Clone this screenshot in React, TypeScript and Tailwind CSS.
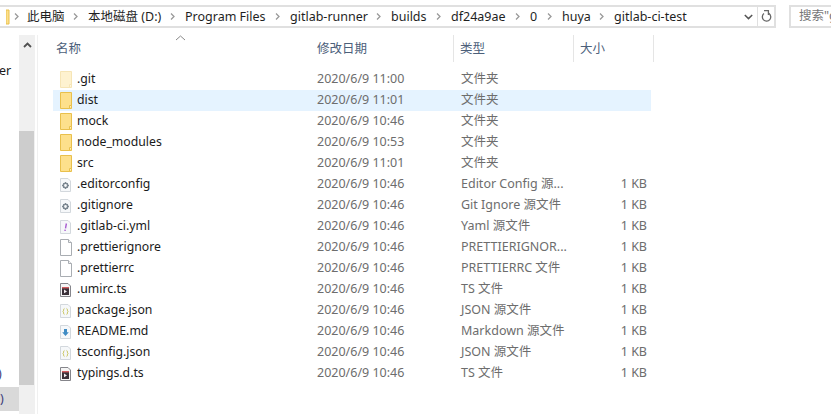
import type { ReactNode } from "react"

type Kind = "folder" | "hidden" | "gear" | "yml" | "blank" | "ts" | "json" | "md"

const files: { name: string; date: string; type: string; size?: string; kind: Kind; hover?: boolean }[] = [
  { name: ".git", date: "2020/6/9 11:00", type: "文件夹", kind: "hidden" },
  { name: "dist", date: "2020/6/9 11:01", type: "文件夹", kind: "folder", hover: true },
  { name: "mock", date: "2020/6/9 10:46", type: "文件夹", kind: "folder" },
  { name: "node_modules", date: "2020/6/9 10:53", type: "文件夹", kind: "folder" },
  { name: "src", date: "2020/6/9 11:01", type: "文件夹", kind: "folder" },
  { name: ".editorconfig", date: "2020/6/9 10:46", type: "Editor Config 源...", size: "1 KB", kind: "gear" },
  { name: ".gitignore", date: "2020/6/9 10:46", type: "Git Ignore 源文件", size: "1 KB", kind: "gear" },
  { name: ".gitlab-ci.yml", date: "2020/6/9 10:46", type: "Yaml 源文件", size: "1 KB", kind: "yml" },
  { name: ".prettierignore", date: "2020/6/9 10:46", type: "PRETTIERIGNOR...", size: "1 KB", kind: "blank" },
  { name: ".prettierrc", date: "2020/6/9 10:46", type: "PRETTIERRC 文件", size: "1 KB", kind: "blank" },
  { name: ".umirc.ts", date: "2020/6/9 10:46", type: "TS 文件", size: "1 KB", kind: "ts" },
  { name: "package.json", date: "2020/6/9 10:46", type: "JSON 源文件", size: "1 KB", kind: "json" },
  { name: "README.md", date: "2020/6/9 10:46", type: "Markdown 源文件", size: "1 KB", kind: "md" },
  { name: "tsconfig.json", date: "2020/6/9 10:46", type: "JSON 源文件", size: "1 KB", kind: "json" },
  { name: "typings.d.ts", date: "2020/6/9 10:46", type: "TS 文件", size: "1 KB", kind: "ts" },
]

function Sep() {
  return (
    <svg width="5" height="7" viewBox="0 0 5 7" className="shrink-0">
      <path d="M1 0.5 L4 3.5 L1 6.5" fill="none" stroke="#9a9a9a" strokeWidth="1.3" />
    </svg>
  )
}

function Crumb({ className, children }: { className: string; children: ReactNode }) {
  return (
    <div className={`flex shrink-0 items-center ${className}`}>
      <span className="flex-1 whitespace-nowrap pt-px">{children}</span>
      <Sep />
      <span className="w-[10px]" />
    </div>
  )
}

function FolderIcon({ faded }: { faded?: boolean }) {
  return (
    <svg width="14" height="17" viewBox="0 0 14 17" className={faded ? "opacity-40" : ""}>
      <path d="M1.5 0.5 H12.5 V16.5 H1.5 Z" fill="#fde08c" stroke="#e9c04c" />
      <path d="M10.5 16.5 V13.5 H12.5" fill="#fff3c8" stroke="#e9c04c" />
    </svg>
  )
}

function BlankIcon() {
  return (
    <svg width="14" height="17" viewBox="0 0 14 17">
      <path d="M1.5 0.5 H9.5 L12.5 3.5 V16.5 H1.5 Z" fill="#ffffff" stroke="#a9adb2" />
      <path d="M9.5 0.5 V3.5 H12.5" fill="#f4f4f4" stroke="#a9adb2" />
    </svg>
  )
}

function SmallDocIcon({ kind }: { kind: Kind }) {
  if (kind === "ts") {
    return (
      <svg width="11" height="14" viewBox="0 0 11 14">
        <path d="M0.5 0.5 H8 L10.5 3 V13.5 H0.5 Z" fill="#f5f5f5" stroke="#85858b" />
        <rect x="2" y="4" width="7" height="8" fill="#3b3139" />
        <rect x="2" y="4" width="7" height="1.4" fill="#cf5a5e" />
        <path d="M4 6.6 L7 8.4 L4 10.2 Z" fill="#f4eef2" />
      </svg>
    )
  }
  return (
    <svg width="11" height="14" viewBox="0 0 11 14">
      <path d="M0.5 0.5 H8 L10.5 3 V13.5 H0.5 Z" fill="#f6f8fa" stroke="#d3d8dd" />
      {kind === "gear" && (
        <>
          <circle cx="5.5" cy="7.5" r="2.2" fill="none" stroke="#7b8791" strokeWidth="1.6" />
          <path d="M5.5 4 V5 M5.5 10 V11 M2 7.5 H3 M8 7.5 H9 M3 5 L3.7 5.7 M7.3 9.3 L8 10 M8 5 L7.3 5.7 M3.7 9.3 L3 10" stroke="#7b8791" />
        </>
      )}
      {kind === "yml" && <path d="M6.4 3.5 L5.5 8.4 M5.2 9.6 L5 11" stroke="#a85cd0" strokeWidth="1.4" />}
      {kind === "json" && (
        <path d="M4.4 4.5 C3.3 4.5 3.9 7 3 7.5 C3.9 8 3.3 10.5 4.4 10.5 M6.6 4.5 C7.7 4.5 7.1 7 8 7.5 C7.1 8 7.7 10.5 6.6 10.5" fill="none" stroke="#c9c45a" />
      )}
      {kind === "md" && <path d="M4 4 H7 V7.2 H8.8 L5.5 11 L2.2 7.2 H4 Z" fill="#3f8cc4" />}
    </svg>
  )
}

function FileIcon({ kind }: { kind: Kind }) {
  if (kind === "folder") return <FolderIcon />
  if (kind === "hidden") return <FolderIcon faded />
  if (kind === "blank") return <BlankIcon />
  return <SmallDocIcon kind={kind} />
}

function HeaderCell({ className, children }: { className: string; children: ReactNode }) {
  return (
    <div className={`flex h-[27px] items-center border-r border-[#e5e5e5] pt-[2px] text-[#4c607a] ${className}`}>
      {children}
    </div>
  )
}

export default function App() {
  return (
    <div
      className="flex h-[414px] w-[831px] flex-col overflow-hidden bg-white text-[12.5px] text-[#1a1a1a]"
      style={{ fontFamily: '"Noto Sans", "Noto Sans CJK SC", sans-serif' }}
    >
      {/* address bar */}
      <div className="flex h-[35px] shrink-0 items-start pt-[5px]">
        <div className="-ml-[10px] flex h-[23px] w-[786px] items-center border-y-2 border-r-2 border-[#e0e0e0] text-[#1f1f1f]">
          <div className="flex h-full w-[24px] shrink-0 items-center justify-end pr-[4px]">
            <svg width="4" height="16" viewBox="0 0 4 16"><path d="M0 1 H3 V15 H0 Z" fill="#fde08c" stroke="#e9c04c" /></svg>
          </div>
          <div className="flex w-[13px] shrink-0 items-center"><Sep /></div>
          <Crumb className="w-[61px]">此电脑</Crumb>
          <Crumb className="w-[97px]">本地磁盘 (D:)</Crumb>
          <Crumb className="w-[105px]">Program Files</Crumb>
          <Crumb className="w-[101px]">gitlab-runner</Crumb>
          <Crumb className="w-[60px]">builds</Crumb>
          <Crumb className="w-[79px]">df24a9ae</Crumb>
          <Crumb className="w-[32px]">0</Crumb>
          <Crumb className="w-[52px]">huya</Crumb>
          <span className="whitespace-nowrap pt-px">gitlab-ci-test</span>
          <div className="flex-1" />
          <svg width="9" height="6" viewBox="0 0 9 6" className="mr-[4px]">
            <path d="M0.8 1 L4.5 4.6 L8.2 1" fill="none" stroke="#555" strokeWidth="1.5" />
          </svg>
          <div className="flex h-full w-[17px] items-center justify-center border-l border-[#e0e0e0]">
            <svg width="11" height="13" viewBox="0 0 11 13">
              <path d="M7.8 3.4 A4.2 4.2 0 1 1 3 3.6" fill="none" stroke="#666" strokeWidth="1.3" />
              <path d="M3 0.6 L7.4 0.6 L7.4 5" fill="none" stroke="#666" strokeWidth="1.3" />
            </svg>
          </div>
        </div>
        <div className="ml-[13px] flex h-[23px] flex-1 items-center overflow-hidden border-y-2 border-l-2 border-[#e0e0e0] pl-[8px] whitespace-nowrap text-[#777]">
          搜索"g
        </div>
      </div>

      <div className="flex min-h-0 flex-1">
        {/* nav pane, cut off on the left */}
        <div className="flex w-[19px] shrink-0 flex-col items-start overflow-hidden">
          <div className="mt-[28px] -ml-px leading-[16px]">er</div>
          <div className="flex-1" />
          <div className="-ml-[2px] h-[16px] leading-[16px] text-[#3b3b7a]">)</div>
          <div className="mt-[5px] mb-[3px] h-[24px] w-[21px] bg-[#d9d9d9] leading-[24px] text-[#3b3b7a]">)</div>
        </div>

        {/* nav scrollbar */}
        <div className="flex w-[16px] shrink-0 flex-col bg-[#f0f0f0]">
          <div className="flex h-[96px] justify-center pt-[7px]">
            <svg width="9" height="6" viewBox="0 0 9 6"><path d="M1 5 L4.5 1.5 L8 5" fill="none" stroke="#505050" strokeWidth="1.8" /></svg>
          </div>
          <div className="mr-px h-[254px] bg-[#cdcdcd]" />
        </div>
        <div className="ml-[2px] w-px shrink-0 bg-[#f0f0f0]" />

        {/* file list */}
        <div className="flex min-w-0 flex-1 flex-col">
          <div className="flex pl-[16px]">
            <div className="relative flex h-[27px] w-[256px] items-center pl-[2px] pt-[2px] text-[#4c607a]">
              名称
              <svg width="11" height="6" viewBox="0 0 11 6" className="absolute left-[121px] top-0">
                <path d="M1 5 L5.5 1 L10 5" fill="none" stroke="#8a8a8a" />
              </svg>
            </div>
            <HeaderCell className="w-[144px] pl-[7px]">修改日期</HeaderCell>
            <HeaderCell className="w-[120px] pl-[6px]">类型</HeaderCell>
            <HeaderCell className="w-[80px] pl-[6px]">大小</HeaderCell>
          </div>
          <div className="mt-[7px] flex flex-col pl-[15px]">
            {files.map((f) => (
              <div
                key={f.name}
                className={`flex h-[21px] w-[598px] items-center ${f.hover ? "bg-[#e5f3ff]" : ""}`}
              >
                <div className="flex w-[24px] shrink-0 justify-center pl-[1px]">
                  <FileIcon kind={f.kind} />
                </div>
                <div className="w-[240px] shrink-0 truncate text-[12.25px]">{f.name}</div>
                <div className="w-[144px] shrink-0 text-[#6d6d6d]">{f.date}</div>
                <div className="w-[120px] shrink-0 whitespace-nowrap text-[#6d6d6d]">{f.type}</div>
                <div className="w-[66px] shrink-0 text-right text-[#6d6d6d]">{f.size}</div>
              </div>
            ))}
          </div>
        </div>
      </div>
    </div>
  )
}
